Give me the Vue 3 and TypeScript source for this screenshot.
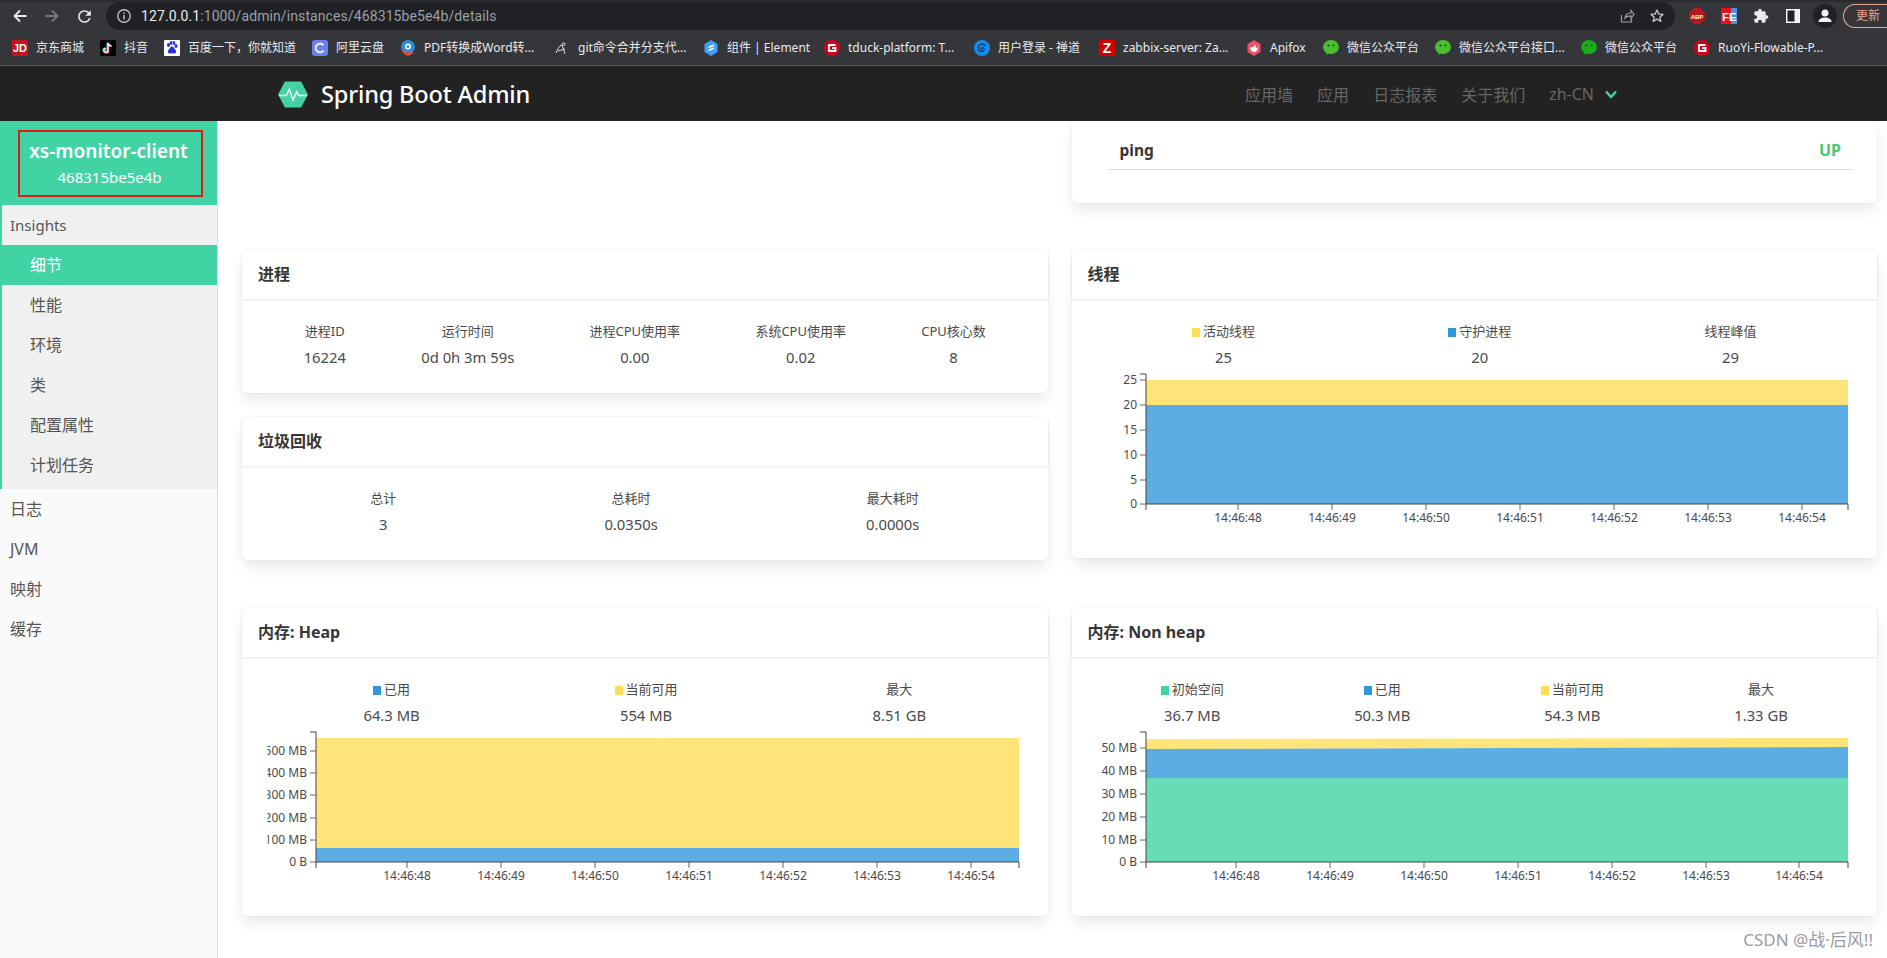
<script setup lang="ts">
interface Bookmark { kind: string; text: string; w: number }
interface Stat { label: string; value: string; dot?: string }
interface Area { color: string; points: string }
interface YTick { label: string; y: number }
interface Chart { axisRight: number; top: number; bottom: number; yTicks: YTick[]; xTicks: number[]; areas: Area[]; clip?: boolean }

const YELLOW = '#ffdd57'
const BLUE = '#3298dc'
const GREEN = '#42d3a5'

const bookmarks: Bookmark[] = [
  { kind: 'jd', text: '京东商城', w: 48 },
  { kind: 'douyin', text: '抖音', w: 24 },
  { kind: 'baidu', text: '百度一下，你就知道', w: 108 },
  { kind: 'ali', text: '阿里云盘', w: 48 },
  { kind: 'pdf', text: 'PDF转换成Word转...', w: 114 },
  { kind: 'git', text: 'git命令合并分支代...', w: 109 },
  { kind: 'element', text: '组件 | Element', w: 81 },
  { kind: 'g', text: 'tduck-platform: T...', w: 110 },
  { kind: 'chandao', text: '用户登录 - 禅道', w: 85 },
  { kind: 'zabbix', text: 'zabbix-server: Za...', w: 107 },
  { kind: 'apifox', text: 'Apifox', w: 37 },
  { kind: 'wechat', text: '微信公众平台', w: 72 },
  { kind: 'wechat', text: '微信公众平台接口...', w: 106 },
  { kind: 'wechat2', text: '微信公众平台', w: 73 },
  { kind: 'g', text: 'RuoYi-Flowable-P...', w: 112 },
]

const navLinks = ['应用墙', '应用', '日志报表', '关于我们']
const insightItems = ['细节', '性能', '环境', '类', '配置属性', '计划任务']
const topItems = ['日志', 'JVM', '映射', '缓存']

const processStats: Stat[] = [
  { label: '进程ID', value: '16224' },
  { label: '运行时间', value: '0d 0h 3m 59s' },
  { label: '进程CPU使用率', value: '0.00' },
  { label: '系统CPU使用率', value: '0.02' },
  { label: 'CPU核心数', value: '8' },
]
const gcStats: Stat[] = [
  { label: '总计', value: '3' },
  { label: '总耗时', value: '0.0350s' },
  { label: '最大耗时', value: '0.0000s' },
]
const threadStats: Stat[] = [
  { label: '活动线程', value: '25', dot: YELLOW },
  { label: '守护进程', value: '20', dot: BLUE },
  { label: '线程峰值', value: '29' },
]
const heapStats: Stat[] = [
  { label: '已用', value: '64.3 MB', dot: BLUE },
  { label: '当前可用', value: '554 MB', dot: YELLOW },
  { label: '最大', value: '8.51 GB' },
]
const nonHeapStats: Stat[] = [
  { label: '初始空间', value: '36.7 MB', dot: GREEN },
  { label: '已用', value: '50.3 MB', dot: BLUE },
  { label: '当前可用', value: '54.3 MB', dot: YELLOW },
  { label: '最大', value: '1.33 GB' },
]

function band(x0: number, x1: number, topL: number, topR: number, botL: number, botR: number): string {
  return `${x0},${topL} ${x1},${topR} ${x1},${botR} ${x0},${botL}`
}

const threadChart: Chart = {
  axisRight: 752, top: 3, bottom: 133,
  yTicks: [
    { label: '25', y: 9 }, { label: '20', y: 34 }, { label: '15', y: 59 },
    { label: '10', y: 84 }, { label: '5', y: 109 }, { label: '0', y: 133 },
  ],
  xTicks: [142, 236, 330, 424, 518, 612, 706],
  areas: [
    { color: YELLOW, points: band(50, 752, 9, 9, 34, 34) },
    { color: BLUE, points: band(50, 752, 34, 34, 133, 133) },
  ],
}
const heapChart: Chart = {
  axisRight: 753, top: 3, bottom: 133, clip: true,
  yTicks: [
    { label: '500 MB', y: 22 }, { label: '400 MB', y: 44 }, { label: '300 MB', y: 66 },
    { label: '200 MB', y: 89 }, { label: '100 MB', y: 111 }, { label: '0 B', y: 133 },
  ],
  xTicks: [141, 235, 329, 423, 517, 611, 705],
  areas: [
    { color: YELLOW, points: band(50, 753, 9, 9, 119, 119) },
    { color: BLUE, points: band(50, 753, 119, 119, 133, 133) },
  ],
}
const nonHeapChart: Chart = {
  axisRight: 752, top: 3, bottom: 133,
  yTicks: [
    { label: '50 MB', y: 19 }, { label: '40 MB', y: 42 }, { label: '30 MB', y: 65 },
    { label: '20 MB', y: 88 }, { label: '10 MB', y: 111 }, { label: '0 B', y: 133 },
  ],
  xTicks: [140, 234, 328, 422, 516, 610, 703],
  areas: [
    { color: YELLOW, points: band(50, 752, 10, 9, 20, 18) },
    { color: BLUE, points: band(50, 752, 20, 18, 49, 49) },
    { color: GREEN, points: band(50, 752, 49, 49, 133, 133) },
  ],
}
const xLabels = ['14:46:48', '14:46:49', '14:46:50', '14:46:51', '14:46:52', '14:46:53', '14:46:54']
const threadCards = [{ t: '线程', s: threadStats, ch: threadChart }]
const memoryCards = [
  { t: '内存: Heap', s: heapStats, ch: heapChart },
  { t: '内存: Non heap', s: nonHeapStats, ch: nonHeapChart },
]
</script>

<template>
  <div class="page">
    <div class="browser">
      <div class="toolbar">
        <svg class="tb-icon" viewBox="0 0 16 16"><path d="M14.500 8H3M8 2.500 2.500 8 8 13.500" fill="none" stroke="#e8eaed" stroke-width="1.800"/></svg>
        <svg class="tb-icon" viewBox="0 0 16 16"><path d="M1.500 8H13M8 2.500 13.500 8 8 13.500" fill="none" stroke="#76787b" stroke-width="1.800"/></svg>
        <svg class="tb-icon reload" viewBox="0 0 24 24"><path fill="#e8eaed" d="M17.650 6.350A7.958 7.958 0 0 0 12 4c-4.420 0-7.990 3.580-7.990 8s3.570 8 7.990 8c3.730 0 6.840-2.550 7.730-6h-2.080A5.990 5.990 0 0 1 12 18c-3.310 0-6-2.690-6-6s2.690-6 6-6c1.660 0 3.140.69 4.220 1.780L13 11h7V4l-2.350 2.350z"/></svg>
        <div class="omnibox">
          <svg class="tb-icon" viewBox="0 0 16 16"><circle cx="8" cy="8" r="6.200" fill="none" stroke="#bdc1c6" stroke-width="1.400"/><path d="M8 7v4.400M8 4.400v1.500" stroke="#bdc1c6" stroke-width="1.500"/></svg>
          <span class="url"><span class="url-host">127.0.0.1</span>:1000/admin/instances/468315be5e4b/details</span>
          <svg class="tb-icon push" viewBox="0 0 16 16"><path d="M2.500 7v7h10v-3M6 10c.3-3.400 3-5 6-5V2.500l3 4-3 3.800V7.800c-2.500 0-4.500.6-6 2.200z" fill="none" stroke="#9aa0a6" stroke-width="1.200"/></svg>
          <svg class="tb-icon" viewBox="0 0 16 16"><path d="m8 2 1.800 4 4.200.4-3.200 2.800 1 4.200L8 11.200l-3.800 2.200 1-4.200L2 6.400 6.200 6z" fill="none" stroke="#bdc1c6" stroke-width="1.400" stroke-linejoin="round"/></svg>
        </div>
        <div class="tools">
          <svg class="tb-icon" viewBox="0 0 16 16"><polygon points="5,0 11,0 16,5 16,11 11,16 5,16 0,11 0,5" fill="#b8171c"/><text x="8" y="10.500" class="abp">ABP</text></svg>
          <svg class="tb-icon" viewBox="0 0 16 16"><rect width="16" height="16" fill="#4a8fe8"/><rect width="10" height="16" fill="#e8101a"/><text x="1" y="12.500" class="fe">FE</text></svg>
          <svg class="tb-icon" viewBox="0 0 24 24"><path fill="#e8eaed" d="M20.500 11H19V7c0-1.100-.9-2-2-2h-4V3.500a2.500 2.500 0 0 0-5 0V5H4c-1.100 0-1.990.9-1.990 2v3.800H3.500c1.490 0 2.700 1.210 2.700 2.700s-1.210 2.700-2.700 2.700H2V20c0 1.100.9 2 2 2h3.800v-1.500c0-1.490 1.210-2.700 2.700-2.700 1.490 0 2.700 1.210 2.700 2.700V22H17c1.100 0 2-.9 2-2v-4h1.500a2.500 2.500 0 0 0 0-5z"/></svg>
          <svg class="tb-icon" viewBox="0 0 16 16"><rect x="1" y="1" width="14" height="14" fill="#f1f3f4"/><rect x="2.500" y="2.500" width="7" height="11" fill="#202124"/></svg>
          <svg class="avatar" viewBox="0 0 24 24"><circle cx="12" cy="12" r="12" fill="#202124"/><circle cx="12" cy="9" r="3.500" fill="#f1f3f4"/><path d="M5.500 18c0-3 3-4.500 6.500-4.500s6.500 1.500 6.500 4.500z" fill="#f1f3f4"/></svg>
          <span class="update">更新</span>
        </div>
      </div>
      <div class="bookmarks">
        <div v-for="b in bookmarks" :key="b.text" class="bookmark">
          <svg class="bm-icon" viewBox="0 0 16 16">
            <template v-if="b.kind === 'jd'">
              <rect width="16" height="16" fill="#c5161d"/><text x="8" y="12" class="ico-text jd">JD</text>
            </template>
            <template v-else-if="b.kind === 'douyin'">
              <rect width="16" height="16" rx="2" fill="#000"/>
              <path d="M8 3v7.500a2 2 0 1 1-2-2M8 3c.4 1.800 1.600 2.800 3.500 3" fill="none" stroke="#25f4ee" stroke-width="1.700" transform="translate(-.6 -.4)"/>
              <path d="M8 3v7.500a2 2 0 1 1-2-2M8 3c.4 1.800 1.600 2.800 3.500 3" fill="none" stroke="#fe2c55" stroke-width="1.700" transform="translate(.6 .4)"/>
              <path d="M8 3v7.500a2 2 0 1 1-2-2M8 3c.4 1.800 1.600 2.800 3.500 3" fill="none" stroke="#fff" stroke-width="1.200"/>
            </template>
            <template v-else-if="b.kind === 'baidu'">
              <rect width="16" height="16" rx="1" fill="#fff"/>
              <ellipse cx="4.500" cy="5" rx="1.500" ry="2" fill="#2932e1"/><ellipse cx="7" cy="3" rx="1.400" ry="1.900" fill="#2932e1"/>
              <ellipse cx="10" cy="3" rx="1.400" ry="1.900" fill="#2932e1"/><ellipse cx="12" cy="6" rx="1.500" ry="2" fill="#2932e1"/>
              <path d="M8 6.500c-2 0-2 2-3.500 3.500-1.500 2 0 4 2 3.500 1-.3 2-.3 3 0 2 .5 3.500-1.500 2-3.500C10 8.500 10 6.500 8 6.500z" fill="#2932e1"/>
            </template>
            <template v-else-if="b.kind === 'ali'">
              <rect width="16" height="16" rx="3" fill="#6a7ff2"/>
              <circle cx="8" cy="8" r="4.300" fill="none" stroke="#fff" stroke-width="1.800" stroke-dasharray="21 6" transform="rotate(35 8 8)"/>
            </template>
            <template v-else-if="b.kind === 'pdf'">
              <path d="M8 0a7 7 0 0 1 7 7c0 2-1 3.500-2 4.500L8 16 3 11.500C2 10.500 1 9 1 7a7 7 0 0 1 7-7z" fill="#2a8fd8"/>
              <circle cx="8" cy="6.500" r="3" fill="#fff"/><circle cx="8" cy="6.500" r="1.500" fill="#2a8fd8"/>
              <path d="M1.500 9c3 3 7 4 12 3-1 2-3 3.500-5.500 3.500C5 15.500 2.500 12.500 1.500 9z" fill="#e2503c"/>
            </template>
            <template v-else-if="b.kind === 'git'">
              <path d="M2 13c1-3 3-6 5-8 1-2 4-3 4-1 0 1.500-2 2-3 1l3 9M11 9 4 11" fill="none" stroke="#dfe1e5" stroke-width="1"/>
            </template>
            <template v-else-if="b.kind === 'element'">
              <polygon points="8,0 14.500,4 14.500,12 8,16 1.500,12 1.500,4" fill="#409eff"/>
              <path d="M11 5 5.500 7.500M11 8 5.500 10.500" stroke="#fff" stroke-width="1.500"/>
            </template>
            <template v-else-if="b.kind === 'g'">
              <circle cx="8" cy="8" r="8" fill="#d0021b"/>
              <path d="M11.500 5H5v6h6.500V8H8" fill="none" stroke="#fff" stroke-width="1.800"/>
            </template>
            <template v-else-if="b.kind === 'chandao'">
              <circle cx="8" cy="8" r="8" fill="#168ce5"/>
              <path d="M12 6c-1-2-5-3-7-.5s-.5 6 2.500 6 3.500-3 1.500-3.500-3 1-1 1.500" fill="none" stroke="#0c3f78" stroke-width="1.300"/>
            </template>
            <template v-else-if="b.kind === 'zabbix'">
              <rect width="16" height="16" fill="#d40000"/><text x="8" y="13" class="ico-text z">Z</text>
            </template>
            <template v-else-if="b.kind === 'apifox'">
              <polygon points="8,0 14.500,4 14.500,12 8,16 1.500,12 1.500,4" fill="#ee4f6a"/>
              <path d="M4 7c0 3 2 5 4 5s4-2 4-5l-2 1.500C9.500 7 9.500 5 9 4 9 6 6.500 8 4 7z" fill="#fff"/>
            </template>
            <template v-else>
              <ellipse cx="8" cy="7" rx="8" ry="7" :fill="b.kind === 'wechat2' ? '#1aad19' : '#4cbf30'"/>
              <path d="M3.500 11 3 15l4-2.500z" :fill="b.kind === 'wechat2' ? '#1aad19' : '#4cbf30'"/>
              <circle cx="5.500" cy="5.500" r="1" fill="#24402a"/><circle cx="10.500" cy="5.500" r="1" fill="#24402a"/>
            </template>
          </svg>
          <span class="bm-text" :style="{ width: b.w + 'px' }">{{ b.text }}</span>
        </div>
      </div>
    </div>

    <nav class="navbar">
      <div class="brand">
        <svg class="logo" viewBox="0 0 32 28">
          <polygon points="8,1.500 24,1.500 30.500,14 24,26.500 8,26.500 1.500,14" fill="#42d3a5" stroke="#42d3a5" stroke-width="2.500" stroke-linejoin="round"/>
          <path d="M1 15h8l3-7 4 12 4-9 2 4h9" fill="none" stroke="#fff" stroke-width="1.500"/>
        </svg>
        <span class="brand-name">Spring Boot Admin</span>
      </div>
      <div class="nav-links">
        <a v-for="l in navLinks" :key="l" class="nav-link">{{ l }}</a>
        <a class="nav-link">zh-CN
          <svg class="chevron" viewBox="0 0 12 10"><path d="M1 2.500 6 8l5-5.500" fill="none" stroke="#42d3a5" stroke-width="2.400"/></svg>
        </a>
      </div>
    </nav>

    <div class="workspace">
      <aside class="sidebar">
        <div class="side-head">
          <div class="instance">
            <div class="instance-name">xs-monitor-client</div>
            <div class="instance-id">468315be5e4b</div>
          </div>
        </div>
        <div class="group">
          <div class="side-item group-title">Insights</div>
          <div v-for="(it, i) in insightItems" :key="it" class="side-item sub" :class="{ active: i === 0 }">{{ it }}</div>
        </div>
        <div v-for="it in topItems" :key="it" class="side-item top">{{ it }}</div>
      </aside>

      <main class="main">
        <div class="row row-health">
          <div></div>
          <section class="card health">
            <div class="ping"><b>ping</b><span class="up">UP</span></div>
          </section>
        </div>

        <div class="row row-mid">
          <div class="stack">
            <section class="card">
              <header class="card-head">进程</header>
              <div class="card-body plain">
                <div class="stats">
                  <div v-for="s in processStats" :key="s.label" class="stat">
                    <div class="stat-label">{{ s.label }}</div><div class="stat-value">{{ s.value }}</div>
                  </div>
                </div>
              </div>
            </section>
            <section class="card">
              <header class="card-head">垃圾回收</header>
              <div class="card-body plain">
                <div class="stats">
                  <div v-for="s in gcStats" :key="s.label" class="stat">
                    <div class="stat-label">{{ s.label }}</div><div class="stat-value">{{ s.value }}</div>
                  </div>
                </div>
              </div>
            </section>
          </div>

          <section v-for="c in threadCards" :key="c.t" class="card">
            <header class="card-head">{{ c.t }}</header>
            <div class="card-body">
              <div class="stats">
                <div v-for="s in c.s" :key="s.label" class="stat">
                  <div class="stat-label"><i v-if="s.dot" class="dot" :style="{ background: s.dot }"></i>{{ s.label }}</div>
                  <div class="stat-value">{{ s.value }}</div>
                </div>
              </div>
              <svg class="chart" viewBox="0 0 757 164">
                <polygon v-for="a in c.ch.areas" :key="a.color" :points="a.points" :fill="a.color" fill-opacity="0.8"/>
                <path :d="`M44 ${c.ch.top}H50V${c.ch.bottom}`" class="axis"/>
                <path :d="`M50 ${c.ch.bottom + 6}V${c.ch.bottom}H${c.ch.axisRight}V${c.ch.bottom + 6}`" class="axis"/>
                <g v-for="y in c.ch.yTicks" :key="y.label">
                  <line x1="44" x2="50" :y1="y.y" :y2="y.y" class="tick"/>
                  <text x="41" :y="y.y + 4" class="y-label">{{ y.label }}</text>
                </g>
                <g v-for="(x, i) in c.ch.xTicks" :key="x">
                  <line :x1="x" :x2="x" :y1="c.ch.bottom" :y2="c.ch.bottom + 6" class="tick"/>
                  <text :x="x" :y="c.ch.bottom + 18" class="x-label">{{ xLabels[i] }}</text>
                </g>
              </svg>
            </div>
          </section>
        </div>

        <div class="row">
          <section v-for="c in memoryCards" :key="c.t" class="card">
            <header class="card-head">{{ c.t }}</header>
            <div class="card-body">
              <div class="stats">
                <div v-for="s in c.s" :key="s.label" class="stat">
                  <div class="stat-label"><i v-if="s.dot" class="dot" :style="{ background: s.dot }"></i>{{ s.label }}</div>
                  <div class="stat-value">{{ s.value }}</div>
                </div>
              </div>
              <svg class="chart" :class="{ clipped: c.ch.clip }" viewBox="0 0 757 164">
                <polygon v-for="a in c.ch.areas" :key="a.color" :points="a.points" :fill="a.color" fill-opacity="0.8"/>
                <path :d="`M44 ${c.ch.top}H50V${c.ch.bottom}`" class="axis"/>
                <path :d="`M50 ${c.ch.bottom + 6}V${c.ch.bottom}H${c.ch.axisRight}V${c.ch.bottom + 6}`" class="axis"/>
                <g v-for="y in c.ch.yTicks" :key="y.label">
                  <line x1="44" x2="50" :y1="y.y" :y2="y.y" class="tick"/>
                  <text x="41" :y="y.y + 4" class="y-label">{{ y.label }}</text>
                </g>
                <g v-for="(x, i) in c.ch.xTicks" :key="x">
                  <line :x1="x" :x2="x" :y1="c.ch.bottom" :y2="c.ch.bottom + 6" class="tick"/>
                  <text :x="x" :y="c.ch.bottom + 18" class="x-label">{{ xLabels[i] }}</text>
                </g>
              </svg>
            </div>
          </section>
        </div>
      </main>
    </div>
    <div class="watermark">CSDN @战·后风!!</div>
  </div>
</template>

<style>
html, body { margin: 0; height: 100%; overflow: hidden; background: #fff; }
</style>

<style scoped>
.page {
  position: relative;
  width: 1887px;
  height: 958px;
  overflow: hidden;
  display: flex;
  flex-direction: column;
  font-family: "Noto Sans", "Noto Sans CJK SC", sans-serif;
  color: #4a4a4a;
}
.browser { background: #35363a; height: 66px; flex: none; border-bottom: 1px solid #55565a; box-sizing: border-box; }
.toolbar {
  height: 30px;
  box-sizing: border-box;
  padding-left: 12px;
  display: flex;
  align-items: center;
  gap: 16px;
  border-top: 2px solid #2a2b2e;
}
.tb-icon { width: 16px; height: 16px; flex: none; display: block; }
.reload { width: 19px; height: 19px; margin: 0 -2px 0 -1px; }
.omnibox {
  flex: none;
  width: 1569px;
  height: 28px;
  margin-left: -2px;
  box-sizing: border-box;
  padding: 0 10px;
  background: #202124;
  border-radius: 14px;
  display: flex;
  align-items: center;
  gap: 9px;
  color: #9aa0a6;
  font: 14px Roboto, "Noto Sans", sans-serif;
}
.url { white-space: nowrap; letter-spacing: 0.1px; }
.url-host { color: #e8eaed; }
.push { margin-left: auto; }
.omnibox .tb-icon:last-child { margin-left: 5px; }
.tools { display: flex; align-items: center; gap: 16px; margin-left: -2px; flex: none; }
.avatar { width: 24px; height: 24px; margin-left: -4px; flex: none; }
.update {
  width: 44px;
  height: 24px;
  margin-left: -10px;
  box-sizing: border-box;
  border: 1px solid #e8a699;
  border-right: 0;
  border-radius: 12px 0 0 12px;
  padding-left: 12px;
  font-size: 12px;
  line-height: 22px;
  color: #f0a090;
  white-space: nowrap;
  flex: none;
}
.abp { font: 700 6px "Liberation Sans", sans-serif; fill: #fff; text-anchor: middle; }
.fe { font: 700 11.5px "Liberation Sans", sans-serif; fill: #fff; }
.bookmarks { display: flex; align-items: center; gap: 16px; height: 35px; padding-left: 12px; }
.bookmark { display: flex; align-items: center; gap: 8px; flex: none; }
.bm-icon { width: 16px; height: 16px; flex: none; }
.bm-text { font-size: 12px; line-height: 16px; color: #e8eaed; white-space: nowrap; }
.ico-text { font-family: "Liberation Sans", sans-serif; font-weight: 700; fill: #fff; text-anchor: middle; }
.jd { font-size: 11px; }
.z { font-size: 14px; }

.navbar {
  height: 55px;
  flex: none;
  background: #222;
  display: flex;
  align-items: center;
  justify-content: space-between;
  padding: 1px 270px 0 278px;
  box-sizing: border-box;
}
.brand { display: flex; align-items: center; gap: 13px; }
.logo { width: 30px; height: 27px; }
.brand-name { font-size: 23.6px; font-weight: 500; color: #fff; white-space: nowrap; letter-spacing: -0.2px; }
.nav-links { display: flex; align-items: center; gap: 24px; }
.nav-link { font-size: 16px; color: #666; white-space: nowrap; display: flex; align-items: center; gap: 11px; }
.chevron { width: 12px; height: 10px; }

.workspace { flex: 1; min-height: 0; display: flex; }
.sidebar { width: 218px; flex: none; background: #fafafa; border-right: 1px solid #dbdbdb; box-sizing: border-box; }
.side-head { background: #42d3a5; height: 84px; padding: 9px 14px 8px 18px; box-sizing: border-box; }
.instance {
  height: 67px;
  border: 2px solid #e01b1b;
  box-sizing: border-box;
  color: #fff;
  text-align: center;
  display: flex;
  flex-direction: column;
  justify-content: center;
}
.instance-name { font-size: 19px; font-weight: 600; line-height: 26px; white-space: nowrap; margin-left: -4px; }
.instance-id { font-size: 15px; line-height: 26px; margin-left: -2px; }
.group { background: #f0f0f0; border-left: 2px solid #42d3a5; padding-bottom: 3.500px; }
.side-item { height: 40px; line-height: 40px; font-size: 16px; color: #555; white-space: nowrap; }
.group-title { padding-left: 8px; font-size: 15px; }
.sub { padding-left: 28px; }
.sub.active { background: #42d3a5; color: #fff; margin-left: -2px; padding-left: 30px; }
.top { padding-left: 10px; }

.main { flex: 1; min-width: 0; padding: 0 10px 0 24px; box-sizing: border-box; overflow: hidden; }
.row { display: grid; grid-template-columns: 1fr 1fr; column-gap: 24px; align-items: start; }
.row-health { margin-bottom: 47px; }
.row-mid { margin-bottom: 48px; }
.stack { display: flex; flex-direction: column; gap: 24px; }
.card {
  background: #fff;
  border-radius: 6px;
  box-shadow: 0 8px 16px -2px rgba(10, 10, 10, 0.1), 0 0 0 1px rgba(10, 10, 10, 0.02);
  min-width: 0;
}
.health { border-radius: 0 0 6px 6px; height: 82px; box-sizing: border-box; padding: 0 24px 0 36px; }
.ping {
  height: 49px;
  box-sizing: border-box;
  padding: 9px 12px 0;
  border-bottom: 1px solid #dbdbdb;
  display: flex;
  align-items: center;
  justify-content: space-between;
  font-size: 15.500px;
  color: #363636;
}
.up { color: #48c774; font-weight: 700; font-size: 16px; }
.card-head {
  height: 49px;
  box-sizing: border-box;
  padding: 0 16px 4px;
  display: flex;
  align-items: center;
  font-size: 16px;
  font-weight: 700;
  color: #363636;
  box-shadow: 0 1px 2px rgba(10, 10, 10, 0.1);
}
.card-body { padding: 22px 24px 23px; }
.card-body.plain { padding-bottom: 26px; }
.stats { display: flex; }
.stat { flex: 1 1 auto; text-align: center; }
.stat-label { font-size: 13px; line-height: 20px; color: #4a4a4a; white-space: nowrap; }
.stat-value { font-size: 14.800px; line-height: 20px; margin-top: 6px; color: #4a4a4a; white-space: nowrap; }
.dot { display: inline-block; width: 8px; height: 9px; margin-right: 3px; vertical-align: -1px; }
.chart { display: block; width: 757px; height: 164px; margin-top: 4px; }
.clipped { clip-path: inset(0 0 0 1.500px); }
.axis { fill: none; stroke: #444; stroke-width: 1; }
.tick { stroke: #666; stroke-width: 1; }
.y-label { font-size: 12px; fill: #4a4a4a; text-anchor: end; }
.x-label { font-size: 12px; fill: #4a4a4a; text-anchor: middle; }
.watermark {
  position: absolute;
  right: 14px;
  bottom: 7px;
  font-size: 17px;
  color: #9b9b9b;
  text-shadow: 0 0 1px #fff;
  white-space: nowrap;
}
</style>
